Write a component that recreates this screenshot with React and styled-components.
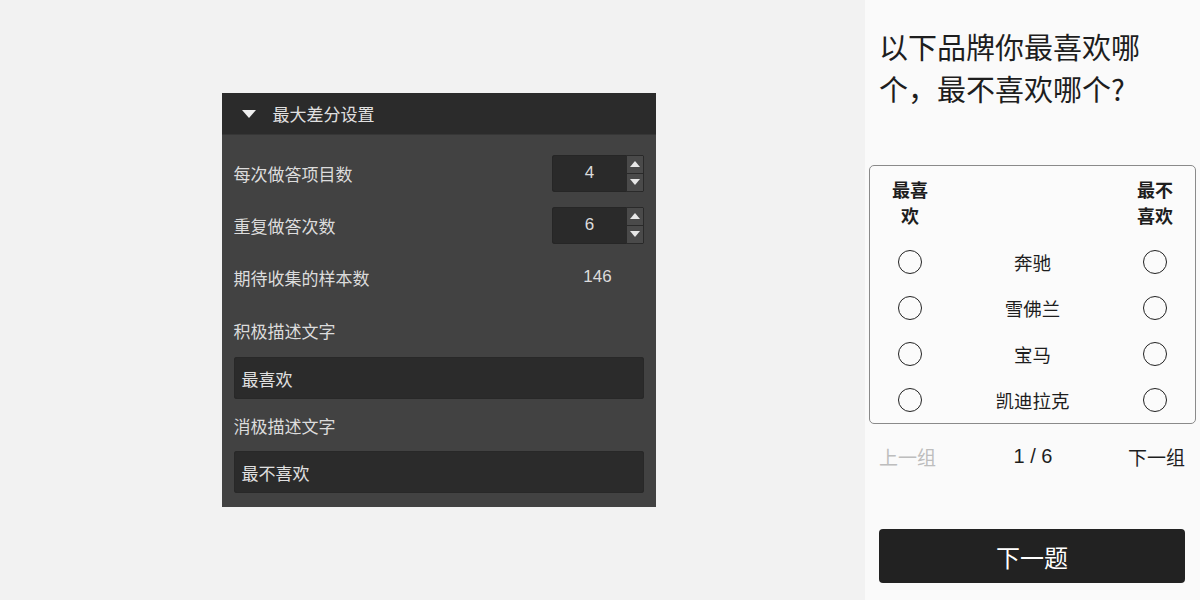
import React from 'react';
import styled, { createGlobalStyle } from 'styled-components';

const GlobalStyle = createGlobalStyle`
	html, body {
		margin: 0;
		padding: 0;
		height: 100%;
	}
	body {
		font-family: "Noto Sans CJK SC", "Noto Sans", sans-serif;
		background: #f2f2f2;
	}
`;

const Page = styled.div`
	display: flex;
	width: 1200px;
	height: 600px;
	overflow: hidden;
`;

const Stage = styled.div`
	flex: 1;
	display: flex;
	align-items: center;
	justify-content: center;
	padding-left: 12px;
	background: #f2f2f2;
`;

const Panel = styled.div`
	width: 434px;
	background: #424242;
	color: #dcdcdc;
	font-size: 17px;
`;

const PanelHeader = styled.div`
	height: 42px;
	display: flex;
	align-items: center;
	padding-left: 20px;
	gap: 17px;
	background: #2b2b2b;
	border-bottom: 1px solid #363636;
	box-sizing: border-box;
	color: #e0e0e0;
`;

const Caret = styled.span`
	width: 0;
	height: 0;
	border-left: 7px solid transparent;
	border-right: 7px solid transparent;
	border-top: 8px solid #f0f0f0;
`;

const PanelBody = styled.div`
	padding: 12px 12px 14px;
`;

const Row = styled.div`
	height: 52px;
	display: flex;
	align-items: center;
	justify-content: space-between;
`;

const Label = styled.div`
	height: ${props => props.tall ? 54 : 52}px;
	display: flex;
	align-items: center;
`;

const ValueBox = styled.div`
	width: 92px;
	text-align: center;
	font-family: "Liberation Sans", "Noto Sans", sans-serif;
	font-size: 17px;
`;

const Spinner = styled.div`
	width: 92px;
	height: 37px;
	display: flex;
	border-radius: 3px;
	overflow: hidden;
	background: #2a2a2a;
	box-shadow: inset 0 0 0 1px #262626;
`;

const SpinValue = styled.div`
	flex: 1;
	display: flex;
	align-items: center;
	justify-content: center;
	font-family: "Liberation Sans", "Noto Sans", sans-serif;
	font-size: 17px;
	padding-left: 2px;
	border-right: 1px solid #2a2a2a;
`;

const SpinButtons = styled.div`
	width: 16px;
	display: flex;
	flex-direction: column;
	gap: 1px;
	background: #2a2a2a;
	padding: 1px 1px 1px 0;
`;

const SpinButton = styled.div`
	flex: 1;
	display: flex;
	align-items: center;
	justify-content: center;
	background: #4a4a4a;
	&::after {
		content: '';
		border-left: 5px solid transparent;
		border-right: 5px solid transparent;
		${props => props.down
			? 'border-top: 6px solid #e8e8e8;'
			: 'border-bottom: 6px solid #e8e8e8;'}
	}
`;

const TextInput = styled.div`
	height: 42px;
	display: flex;
	align-items: center;
	padding-left: 8px;
	background: #2b2b2b;
	border-radius: 3px;
	box-shadow: inset 0 0 0 1px #282828;
	color: #e0e0e0;
`;

const Phone = styled.div`
	width: 335px;
	background: #fafafa;
	display: flex;
	flex-direction: column;
	padding: 25px 4px 0;
	box-sizing: border-box;
`;

const Question = styled.div`
	font-size: 29px;
	line-height: 42px;
	color: #1e1e1e;
	max-width: 280px;
	padding-left: 10px;
`;

const Card = styled.div`
	margin-top: 56px;
	border: 1px solid #8a8a8a;
	border-radius: 5px;
	padding: 10px 0 0;
	background: #fbfbfb;
`;

const Grid = styled.div`
	display: grid;
	grid-template-columns: 80px 1fr 80px;
	align-items: center;
	justify-items: center;
`;

const HeadCell = styled.div`
	width: 40px;
	font-size: 18px;
	line-height: 26px;
	font-weight: 700;
	text-align: center;
	color: #1e1e1e;
	padding-bottom: 11px;
`;

const Brand = styled.div`
	height: 46px;
	display: flex;
	align-items: center;
	font-size: 18.5px;
	color: #1e1e1e;
`;

const Radio = styled.div`
	width: 24px;
	height: 24px;
	border: 1.5px solid #222;
	border-radius: 50%;
	box-sizing: border-box;
`;

const Pager = styled.div`
	height: 64px;
	display: flex;
	align-items: center;
	justify-content: space-between;
	padding: 0 11px 0 10px;
	font-size: 19px;
`;

const PagerLink = styled.span`
	color: ${props => props.disabled ? '#bdbdbd' : '#1e1e1e'};
`;

const PageCount = styled.span`
	font-family: "Liberation Sans", "Noto Sans", sans-serif;
	font-size: 20px;
	color: #1e1e1e;
	padding-left: 2px;
`;

const NextButton = styled.div`
	margin: 41px 11px 0 10px;
	height: 54px;
	border-radius: 4px;
	background: #222;
	color: #fff;
	font-size: 24px;
	display: flex;
	align-items: center;
	justify-content: center;
`;

const brands = ['奔驰', '雪佛兰', '宝马', '凯迪拉克'];

const NumberField = ({ value }) => (
	<Spinner>
		<SpinValue>{value}</SpinValue>
		<SpinButtons>
			<SpinButton />
			<SpinButton down />
		</SpinButtons>
	</Spinner>
);

const App = () => (
	<Page>
		<GlobalStyle />
		<Stage>
			<Panel>
				<PanelHeader>
					<Caret />
					<span>最大差分设置</span>
				</PanelHeader>
				<PanelBody>
					<Row>
						<span>每次做答项目数</span>
						<NumberField value="4" />
					</Row>
					<Row>
						<span>重复做答次数</span>
						<NumberField value="6" />
					</Row>
					<Row>
						<span>期待收集的样本数</span>
						<ValueBox>146</ValueBox>
					</Row>
					<Label tall>积极描述文字</Label>
					<TextInput>最喜欢</TextInput>
					<Label>消极描述文字</Label>
					<TextInput>最不喜欢</TextInput>
				</PanelBody>
			</Panel>
		</Stage>
		<Phone>
			<Question>以下品牌你最喜欢哪个，最不喜欢哪个?</Question>
			<Card>
				<Grid>
					<HeadCell>最喜欢</HeadCell>
					<span />
					<HeadCell>最不喜欢</HeadCell>
					{brands.map(name => (
						<React.Fragment key={name}>
							<Radio />
							<Brand>{name}</Brand>
							<Radio />
						</React.Fragment>
					))}
				</Grid>
			</Card>
			<Pager>
				<PagerLink disabled>上一组</PagerLink>
				<PageCount>1 / 6</PageCount>
				<PagerLink>下一组</PagerLink>
			</Pager>
			<NextButton>下一题</NextButton>
		</Phone>
	</Page>
);

export default App;
